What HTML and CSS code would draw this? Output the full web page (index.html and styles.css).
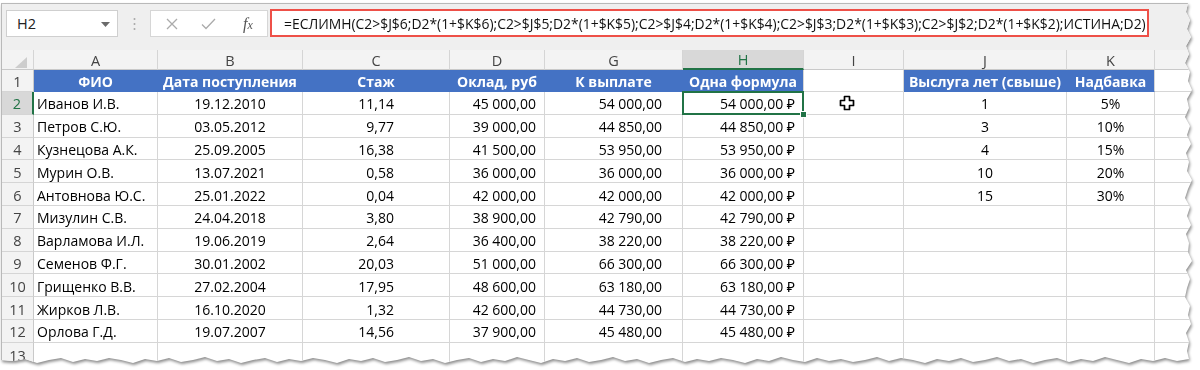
FILE: index.html
```html
<!DOCTYPE html>
<html lang="ru">
<head>
<meta charset="utf-8">
<title>ЕСЛИМН</title>
<link rel="stylesheet" href="styles.css">
</head>
<body>
<div class="frame">
  <div class="sheet">
    <div class="toolbar">
      <div class="namebox"><span>H2</span><svg class="dd" width="9" height="5" viewBox="0 0 9 5"><polygon points="0,0 9,0 4.5,5" fill="#6b6b6b"/></svg></div>
      <div class="grip"><svg width="3" height="14" viewBox="0 0 3 14"><circle cx="1.5" cy="2" r="1" fill="#a8a8a8"/><circle cx="1.5" cy="7" r="1" fill="#a8a8a8"/><circle cx="1.5" cy="12" r="1" fill="#a8a8a8"/></svg></div>
      <div class="fbtns">
        <svg class="ic-x" width="12" height="12" viewBox="0 0 12 12"><path d="M1 1L11 11M11 1L1 11" stroke="#ababab" stroke-width="1.3" fill="none"/></svg>
        <svg class="ic-ok" width="15" height="12" viewBox="0 0 15 12"><path d="M1 6.5L5 10.5L14 1" stroke="#ababab" stroke-width="1.3" fill="none"/></svg>
        <span class="fx">f<span class="fxx">x</span></span>
      </div>
      <div class="formula">=ЕСЛИМН(C2&gt;$J$6;D2*(1+$K$6);C2&gt;$J$5;D2*(1+$K$5);C2&gt;$J$4;D2*(1+$K$4);C2&gt;$J$3;D2*(1+$K$3);C2&gt;$J$2;D2*(1+$K$2);ИСТИНА;D2)</div>
    </div>
    <div class="grid">
      <div class="hd corner"><svg width="12" height="11" viewBox="0 0 12 11"><polygon points="12,0 12,11 0,11" fill="#cdcdcd"/></svg></div>
      <div class="hd">A</div><div class="hd">B</div><div class="hd">C</div><div class="hd">D</div><div class="hd">G</div><div class="hd selc">H</div><div class="hd">I</div><div class="hd">J</div><div class="hd">K</div><div class="hd"></div>

      <div class="rh">1</div>
      <div class="c b">ФИО</div><div class="c b">Дата поступления</div><div class="c b">Стаж</div><div class="c b">Оклад, руб</div><div class="c b">К выплате</div><div class="c b bl">Одна формула</div><div class="c"></div><div class="c b">Выслуга лет (свыше)</div><div class="c b bl">Надбавка</div><div class="c"></div>

      <div class="rh selr">2</div>
      <div class="c l">Иванов И.В.</div><div class="c m">19.12.2010</div><div class="c r rc">11,14</div><div class="c r">45 000,00</div><div class="c r rg">54 000,00</div><div class="c r active">54 000,00 ₽<span class="handle"></span></div><div class="c m"><svg class="cursor" width="16" height="16" viewBox="0 0 16 16"><path d="M5.5 1.5h5v4h4v5h-4v4h-5v-4h-4v-5h4z" fill="#fff" stroke="#000" stroke-width="1.7" stroke-linejoin="round"/></svg></div><div class="c m">1</div><div class="c m">5%</div><div class="c"></div>

      <div class="rh">3</div>
      <div class="c l">Петров С.Ю.</div><div class="c m">03.05.2012</div><div class="c r rc">9,77</div><div class="c r">39 000,00</div><div class="c r rg">44 850,00</div><div class="c r">44 850,00 ₽</div><div class="c"></div><div class="c m">3</div><div class="c m">10%</div><div class="c"></div>

      <div class="rh">4</div>
      <div class="c l">Кузнецова А.К.</div><div class="c m">25.09.2005</div><div class="c r rc">16,38</div><div class="c r">41 500,00</div><div class="c r rg">53 950,00</div><div class="c r">53 950,00 ₽</div><div class="c"></div><div class="c m">4</div><div class="c m">15%</div><div class="c"></div>

      <div class="rh">5</div>
      <div class="c l">Мурин О.В.</div><div class="c m">13.07.2021</div><div class="c r rc">0,58</div><div class="c r">36 000,00</div><div class="c r rg">36 000,00</div><div class="c r">36 000,00 ₽</div><div class="c"></div><div class="c m">10</div><div class="c m">20%</div><div class="c"></div>

      <div class="rh">6</div>
      <div class="c l">Антовнова Ю.С.</div><div class="c m">25.01.2022</div><div class="c r rc">0,04</div><div class="c r">42 000,00</div><div class="c r rg">42 000,00</div><div class="c r">42 000,00 ₽</div><div class="c"></div><div class="c m">15</div><div class="c m">30%</div><div class="c"></div>

      <div class="rh">7</div>
      <div class="c l">Мизулин С.В.</div><div class="c m">24.04.2018</div><div class="c r rc">3,80</div><div class="c r">38 900,00</div><div class="c r rg">42 790,00</div><div class="c r">42 790,00 ₽</div><div class="c"></div><div class="c"></div><div class="c"></div><div class="c"></div>

      <div class="rh">8</div>
      <div class="c l">Варламова И.Л.</div><div class="c m">19.06.2019</div><div class="c r rc">2,64</div><div class="c r">36 400,00</div><div class="c r rg">38 220,00</div><div class="c r">38 220,00 ₽</div><div class="c"></div><div class="c"></div><div class="c"></div><div class="c"></div>

      <div class="rh">9</div>
      <div class="c l">Семенов Ф.Г.</div><div class="c m">30.01.2002</div><div class="c r rc">20,03</div><div class="c r">51 000,00</div><div class="c r rg">66 300,00</div><div class="c r">66 300,00 ₽</div><div class="c"></div><div class="c"></div><div class="c"></div><div class="c"></div>

      <div class="rh">10</div>
      <div class="c l">Грищенко В.В.</div><div class="c m">27.02.2004</div><div class="c r rc">17,95</div><div class="c r">48 600,00</div><div class="c r rg">63 180,00</div><div class="c r">63 180,00 ₽</div><div class="c"></div><div class="c"></div><div class="c"></div><div class="c"></div>

      <div class="rh">11</div>
      <div class="c l">Жирков Л.В.</div><div class="c m">16.10.2020</div><div class="c r rc">1,32</div><div class="c r">42 600,00</div><div class="c r rg">44 730,00</div><div class="c r">44 730,00 ₽</div><div class="c"></div><div class="c"></div><div class="c"></div><div class="c"></div>

      <div class="rh">12</div>
      <div class="c l">Орлова Г.Д.</div><div class="c m">19.07.2007</div><div class="c r rc">14,56</div><div class="c r">37 900,00</div><div class="c r rg">45 480,00</div><div class="c r">45 480,00 ₽</div><div class="c"></div><div class="c"></div><div class="c"></div><div class="c"></div>

      <div class="rh">13</div>
      <div class="c"></div><div class="c"></div><div class="c"></div><div class="c"></div><div class="c"></div><div class="c"></div><div class="c"></div><div class="c"></div><div class="c"></div><div class="c"></div>
    </div>
  </div>
</div>
</body>
</html>
```

FILE: styles.css
```css
* { box-sizing: border-box; }
html, body { margin: 0; padding: 0; background: #fff; }
body { width: 1200px; height: 370px; overflow: hidden; font-family: "Open Sans", "Noto Sans", "DejaVu Sans", sans-serif; }

.frame {
  margin: 3px 0 0 1px;
  width: 1199px;
  height: 367px;
  filter: drop-shadow(1px 2px 1.5px rgba(0,0,0,0.45));
}
.sheet {
  width: 1199px;
  height: 367px;
  background: #fff;
  border-top: 1px solid #b9b9b9;
  border-left: 1px solid #b9b9b9;
  overflow: hidden;
  clip-path: polygon(0 0, 1187px 0, 1185px 9px, 1189px 17px, 1186px 26px, 1190px 34px, 1185px 43px, 1188px 51px, 1184px 60px, 1189px 69px, 1187px 78px, 1191px 87px, 1186px 96px, 1188px 105px, 1184px 114px, 1189px 123px, 1186px 132px, 1190px 141px, 1185px 150px, 1188px 159px, 1186px 168px, 1191px 177px, 1187px 186px, 1184px 195px, 1189px 204px, 1186px 213px, 1190px 222px, 1185px 231px, 1188px 240px, 1187px 249px, 1191px 258px, 1185px 267px, 1189px 276px, 1186px 285px, 1184px 294px, 1189px 303px, 1187px 312px, 1190px 321px, 1185px 330px, 1188px 339px, 1186px 348px, 1188px 356px,
    1176px 358px, 1164px 355px, 1152px 358px, 1140px 356px, 1128px 360px, 1116px 357px, 1104px 354px, 1092px 358px, 1080px 356px, 1068px 359px, 1056px 355px, 1044px 357px, 1032px 360px, 1020px 356px, 1008px 358px, 996px 354px, 984px 357px, 972px 359px, 960px 355px, 948px 358px, 936px 356px, 924px 360px, 912px 357px, 900px 355px, 888px 358px, 876px 354px, 864px 357px, 852px 359px, 840px 356px, 828px 358px, 816px 355px, 804px 359px, 792px 357px, 780px 354px, 768px 358px, 756px 356px, 744px 360px, 732px 357px, 720px 355px, 708px 358px, 696px 356px, 684px 359px, 672px 355px, 660px 357px, 648px 360px, 636px 356px, 624px 358px, 612px 354px, 600px 357px, 588px 359px, 576px 355px, 564px 358px, 552px 356px, 540px 360px, 528px 357px, 516px 354px, 504px 358px, 492px 356px, 480px 359px, 468px 355px, 456px 357px, 444px 360px, 432px 356px, 420px 358px, 408px 354px, 396px 357px, 384px 359px, 372px 355px, 360px 358px, 348px 356px, 336px 360px, 324px 357px, 312px 355px, 300px 358px, 288px 356px, 276px 359px, 264px 355px, 252px 357px, 240px 360px, 228px 356px, 216px 358px, 204px 354px, 192px 357px, 180px 359px, 168px 355px, 156px 358px, 144px 356px, 132px 360px, 120px 357px, 108px 355px, 96px 358px, 84px 356px, 72px 359px, 60px 355px, 48px 357px, 36px 360px, 24px 356px, 12px 358px, 0 357px);
}

/* toolbar */
.toolbar {
  height: 46px;
  background: #efefef;
  display: flex;
  align-items: flex-start;
  padding: 6px 0 0 4px;
}
.namebox {
  width: 112px;
  height: 27px;
  background: #fff;
  border: 1px solid #cfcfcf;
  display: flex;
  align-items: center;
  justify-content: space-between;
  padding: 0 7px 0 10px;
  font-size: 14.5px;
  color: #222;
}
.namebox .dd { margin-top: 1px; }
.grip {
  width: 32px;
  height: 27px;
  display: flex;
  align-items: center;
  justify-content: center;
}
.fbtns {
  width: 118px;
  height: 27px;
  background: #fff;
  border: 1px solid #d6d6d6;
  display: flex;
  align-items: center;
  padding-left: 15px;
}
.ic-x { margin-right: 23px; }
.ic-ok { margin-right: 27px; }
.fx {
  font-family: "Liberation Serif", "DejaVu Serif", serif;
  font-style: italic;
  font-size: 16px;
  color: #555;
  line-height: 1;
}
.fxx { font-size: 12px; }
.formula {
  margin-left: 2px;
  width: 879px;
  height: 28px;
  margin-top: -1px;
  background: #fff;
  border: 2px solid #ee5048;
  padding: 0 0 0 12px;
  display: flex;
  align-items: center;
  font-size: 13.9px;
  color: #111;
  white-space: nowrap;
  overflow: hidden;
}

/* grid */
.grid {
  display: grid;
  grid-template-columns: 32px 124px 145px 147px 95px 138px 121px 100px 163px 88px 1fr;
  grid-template-rows: 20px 22px repeat(11, 22.8px) 24px;
  font-size: 14px;
  color: #000;
}
.hd {
  background: #f3f3f3;
  border-right: 1px solid #d5d5d5;
  border-bottom: 1px solid #c9c9c9;
  display: flex;
  align-items: center;
  justify-content: center;
  color: #444;
  font-size: 14.5px;
  padding-top: 1px;
}
.hd.corner {
  justify-content: flex-end;
  align-items: flex-end;
  padding: 0 6px 1px 0;
}
.hd.selc {
  background: #d8d8d8;
  color: #217346;
  border-bottom: 2px solid #217346;
}
.rh {
  background: #f3f3f3;
  border-right: 1px solid #c9c9c9;
  border-bottom: 1px solid #d5d5d5;
  display: flex;
  align-items: center;
  justify-content: center;
  color: #444;
  font-size: 14.5px;
  padding-top: 2px;
}
.rh.selr {
  background: #d8d8d8;
  color: #217346;
  border-right: 2px solid #217346;
}
.c {
  position: relative;
  border-right: 1px solid #d6d6d6;
  border-bottom: 1px solid #d6d6d6;
  display: flex;
  align-items: center;
  padding: 2px 8px 0 3px;
  white-space: nowrap;
  overflow: visible;
}
.c.l { justify-content: flex-start; }
.c.m { justify-content: center; padding-right: 3px; }
.c.r { justify-content: flex-end; }
.c.rc { padding-right: 55px; }
.c.rg { padding-right: 20px; }
.c.b {
  background: #4472c4;
  color: #fff;
  font-weight: 700;
  justify-content: center;
  padding-right: 3px;
  border-right-color: #4472c4;
  border-bottom-color: #4472c4;
}
.c.b.bl { border-right-color: #d6d6d6; }
.c.active::before {
  content: "";
  position: absolute;
  left: -1px;
  top: -1px;
  right: -1px;
  bottom: -1px;
  border: 2px solid #217346;
}
.handle {
  position: absolute;
  right: -4px;
  bottom: -4px;
  width: 7px;
  height: 7px;
  background: #217346;
  border: 1px solid #fff;
  z-index: 2;
}
.cursor { margin-right: 14px; margin-top: -2px; }
```
